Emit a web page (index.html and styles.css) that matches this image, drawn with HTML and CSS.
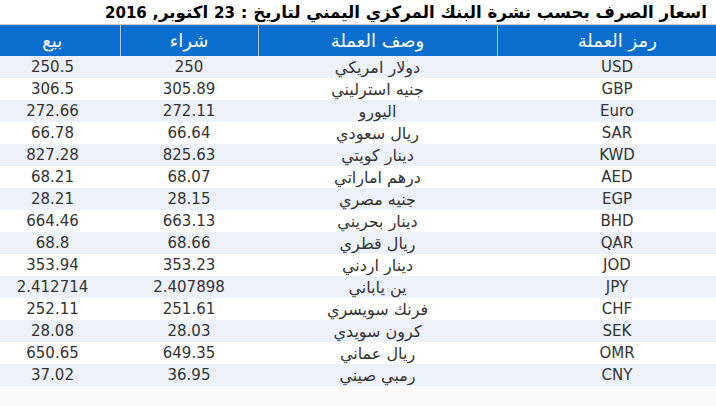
FILE: index.html
```html
<!DOCTYPE html>
<html lang="ar" dir="rtl">
<head>
<meta charset="utf-8">
<title>اسعار الصرف</title>
<link rel="stylesheet" href="styles.css">
</head>
<body>
<h1 class="title">اسعار الصرف بحسب نشرة البنك المركزي اليمني لتاريخ : <span class="num">23</span> اكتوبر, <span class="num">2016</span></h1>
<table class="rates">
  <colgroup>
    <col class="c-code"><col class="c-desc"><col class="c-buy"><col class="c-sell">
  </colgroup>
  <thead>
    <tr><th>رمز العملة</th><th>وصف العملة</th><th>شراء</th><th>بيع</th></tr>
  </thead>
  <tbody>
    <tr><td>USD</td><td class="desc">دولار امريكي</td><td>250</td><td>250.5</td></tr>
    <tr><td>GBP</td><td class="desc">جنيه استرليني</td><td>305.89</td><td>306.5</td></tr>
    <tr><td>Euro</td><td class="desc">اليورو</td><td>272.11</td><td>272.66</td></tr>
    <tr><td>SAR</td><td class="desc">ريال سعودي</td><td>66.64</td><td>66.78</td></tr>
    <tr><td>KWD</td><td class="desc">دينار كويتي</td><td>825.63</td><td>827.28</td></tr>
    <tr><td>AED</td><td class="desc">درهم اماراتي</td><td>68.07</td><td>68.21</td></tr>
    <tr><td>EGP</td><td class="desc">جنيه مصري</td><td>28.15</td><td>28.21</td></tr>
    <tr><td>BHD</td><td class="desc">دينار بحريني</td><td>663.13</td><td>664.46</td></tr>
    <tr><td>QAR</td><td class="desc">ريال قطري</td><td>68.66</td><td>68.8</td></tr>
    <tr><td>JOD</td><td class="desc">دينار اردني</td><td>353.23</td><td>353.94</td></tr>
    <tr><td>JPY</td><td class="desc">ين ياباني</td><td>2.407898</td><td>2.412714</td></tr>
    <tr><td>CHF</td><td class="desc">فرنك سويسري</td><td>251.61</td><td>252.11</td></tr>
    <tr><td>SEK</td><td class="desc">كرون سويدي</td><td>28.03</td><td>28.08</td></tr>
    <tr><td>OMR</td><td class="desc">ريال عماني</td><td>649.35</td><td>650.65</td></tr>
    <tr><td>CNY</td><td class="desc">رمبي صيني</td><td>36.95</td><td>37.02</td></tr>
  </tbody>
</table>
</body>
</html>
```
FILE: styles.css
```css
html, body {
  margin: 0;
  padding: 0;
  background: #fafafa;
  font-family: "DejaVu Sans", sans-serif;
  overflow: hidden;
}
.title {
  margin: 0;
  height: 24px;
  padding: 0 9px 0 0;
  background: #ffffff;
  font-size: 16.7px;
  font-weight: bold;
  line-height: 25px;
  color: #000;
  text-align: right;
  white-space: nowrap;
  overflow: hidden;
}
.title .num {
  font-size: 15px;
}
.rates {
  width: 752px;
  margin: 0 -21px 0 0;
  border-collapse: collapse;
  table-layout: fixed;
  border-top: 1px solid #c8c8c8;
  font-size: 15px;
}
.c-code { width: 240px; }
.c-desc { width: 239px; }
.c-buy { width: 138px; }
.c-sell { width: 135px; }
.rates th {
  box-sizing: border-box;
  height: 31px;
  padding: 1px 0 0;
  background: #0b6dcd;
  color: #ffffff;
  font-size: 18px;
  line-height: 28px;
  font-weight: normal;
  text-align: center;
  border-left: 1px solid #b8c8d8;
}
.rates th:last-child { border-left: none; }
.rates td {
  box-sizing: border-box;
  height: 22px;
  padding: 1px 0 0;
  text-align: center;
  color: #333333;
  line-height: 21px;
  overflow: hidden;
}
.rates td.desc {
  font-size: 16px;
}
.rates tbody tr:nth-child(odd) { background: #edf2fa; }
.rates tbody tr:nth-child(even) { background: #ffffff; }
```
